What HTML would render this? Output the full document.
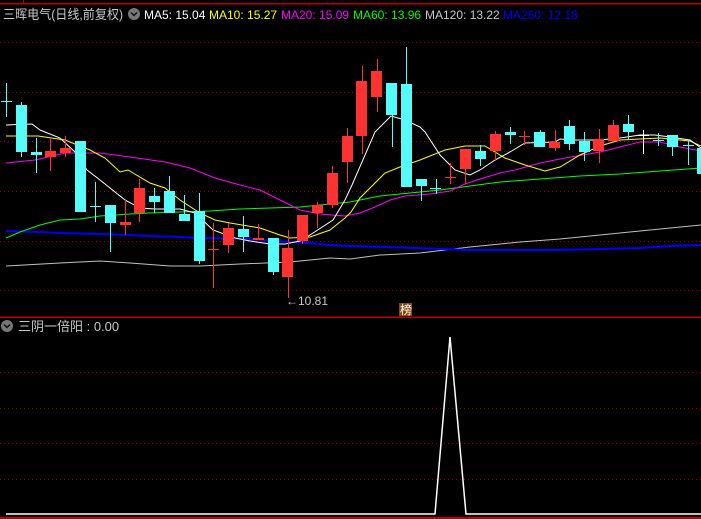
<!DOCTYPE html>
<html><head><meta charset="utf-8"><style>
html,body{margin:0;padding:0;background:#000;width:701px;height:519px;overflow:hidden}
svg{display:block}
text{font-family:"Liberation Sans","Noto Sans CJK SC",sans-serif}
</style></head><body>
<svg width="701" height="519" viewBox="0 0 701 519" xmlns="http://www.w3.org/2000/svg">
<rect width="701" height="519" fill="#000"/>
<g shape-rendering="crispEdges">
<rect x="0" y="3" width="701" height="1.5" fill="#c00000"/>
<rect x="23" y="0" width="1" height="4" fill="#c00000"/>
<rect x="0" y="316.5" width="701" height="1.5" fill="#c00000"/>
<rect x="0" y="517" width="701" height="2" fill="#c00000"/>
<g stroke="#a00000" stroke-width="1" stroke-dasharray="1,3">
<line x1="0" y1="42.5" x2="701" y2="42.5"/><line x1="0" y1="92.5" x2="701" y2="92.5"/>
<line x1="0" y1="141.5" x2="701" y2="141.5"/><line x1="0" y1="191.5" x2="701" y2="191.5"/>
<line x1="0" y1="241.5" x2="701" y2="241.5"/><line x1="0" y1="290.5" x2="701" y2="290.5"/>
<line x1="0" y1="372.5" x2="701" y2="372.5"/><line x1="0" y1="408.5" x2="701" y2="408.5"/>
<line x1="0" y1="443.5" x2="701" y2="443.5"/><line x1="0" y1="479.5" x2="701" y2="479.5"/>
</g>
</g>
<text x="3" y="19" fill="#c8c8c8" font-size="13" textLength="120" lengthAdjust="spacingAndGlyphs">三晖电气(日线,前复权)</text>
<circle cx="134" cy="14" r="6" fill="#777"/><path d="M131 12.5 L134 15.5 L137 12.5" stroke="#111" stroke-width="1.5" fill="none"/>
<text y="19" font-size="12"><tspan x="144" fill="#fff">MA5: 15.04</tspan><tspan x="209" fill="#ffff00">MA10: 15.27</tspan><tspan x="281" fill="#ff00ff">MA20: 15.09</tspan><tspan x="353" fill="#00ff00">MA60: 13.96</tspan><tspan x="425" fill="#c8c8c8">MA120: 13.22</tspan><tspan x="503" fill="#0000ff">MA250: 12.18</tspan></text>

<g fill="none" stroke-width="1">
<polyline stroke="#c0c0c0" points="6,266 60,263 100,261 130,263 170,266 200,266 240,264 290,262 330,258 350,259 380,255 420,253 470,247 520,242 560,239 600,235 650,230 701,225"/>
<polyline stroke="#0000ff" stroke-width="2" points="6,231 40,232 60,233 100,234 130,235 150,236 180,237 200,238 230,238 260,240 290,242 310,243 330,245 350,246 385,247 415,248 470,250 555,250 600,249 640,248 670,246 701,245"/>
<polyline stroke="#00ff00" points="6,238 20,232 40,225 60,220 80,219 100,216 130,214 150,213 180,212 210,211 240,209 270,208 300,207 320,205 340,203 350,202 380,196 410,193 440,190 470,186 500,182 540,179 580,176 620,174 660,171 701,168"/>
<polyline stroke="#ff00ff" points="6,163 35,160 65,153 100,153 130,157 165,162 190,168 215,178 240,185 260,190 280,200 300,210 320,214 345,216 360,213 375,207 390,200 405,196 430,194 450,191 465,184 480,179 500,173 515,170 540,163 565,158 600,152 620,147 640,142 660,142 680,147 701,151"/>
<polyline stroke="#ffff00" points="6,136 38,136 65,140 90,150 105,158 120,172 128,170 150,183 165,188 180,200 200,213 215,220 230,223 260,228 280,235 290,238 310,237 330,230 345,218 351,212 360,198 385,173 400,167 420,160 445,150 465,146 485,146 505,158 525,165 545,171 560,167 580,155 600,146 620,140 640,139 660,138 690,141 701,146"/>
<polyline stroke="#ffffff" points="6,125 32,124 40,130 60,138 75,152 87,170 100,180 125,200 140,208 155,209 180,209 195,213 213,230 235,238 250,241 270,244 285,244 300,241 310,235 333,220 345,200 352,185 375,132 391,116 405,120 420,127 425,132 440,155 455,170 470,175 480,170 495,160 510,152 525,143 555,142 560,139 575,140 600,140 620,138 640,135 655,135 670,137 690,140 701,148"/>
</g>

<g shape-rendering="crispEdges">
<g fill="#54fcfc">
<rect x="6" y="83" width="1" height="34"/><rect x="1" y="101" width="11" height="1"/>
<rect x="21" y="102" width="1" height="55"/><rect x="16" y="105" width="11" height="47"/>
<rect x="36" y="138" width="1" height="35"/><rect x="31" y="152" width="11" height="3"/>
<rect x="75" y="141" width="11" height="71"/>
<rect x="95" y="182" width="1" height="40"/><rect x="90" y="206" width="11" height="1"/>
<rect x="110" y="205" width="1" height="47"/><rect x="105" y="205" width="11" height="18"/>
<rect x="154" y="188" width="1" height="25"/><rect x="149" y="196" width="11" height="6"/>
<rect x="169" y="176" width="1" height="37"/><rect x="164" y="191" width="11" height="22"/>
<rect x="184" y="195" width="1" height="26"/><rect x="179" y="214" width="11" height="7"/>
<rect x="199" y="193" width="1" height="71"/><rect x="194" y="211" width="11" height="50"/>
<rect x="243" y="216" width="1" height="36"/><rect x="238" y="229" width="11" height="8"/>
<rect x="273" y="238" width="1" height="37"/><rect x="268" y="238" width="11" height="34"/>
<rect x="392" y="115" width="1" height="32"/><rect x="386" y="83" width="11" height="32"/>
<rect x="406" y="47" width="1" height="140"/><rect x="401" y="84" width="11" height="103"/>
<rect x="421" y="179" width="1" height="22"/><rect x="416" y="179" width="11" height="7"/>
<rect x="436" y="179" width="1" height="15"/><rect x="430" y="188" width="11" height="1"/>
<rect x="480" y="145" width="1" height="21"/><rect x="475" y="151" width="11" height="8"/>
<rect x="510" y="127" width="1" height="17"/><rect x="505" y="132" width="11" height="3"/>
<rect x="540" y="130" width="1" height="17"/><rect x="534" y="132" width="11" height="15"/>
<rect x="569" y="120" width="1" height="30"/><rect x="564" y="126" width="11" height="18"/>
<rect x="584" y="132" width="1" height="29"/><rect x="579" y="141" width="11" height="11"/>
<rect x="628" y="115" width="1" height="24"/><rect x="623" y="124" width="11" height="8"/>
<rect x="658" y="133" width="1" height="13"/><rect x="653" y="140" width="11" height="1"/>
<rect x="672" y="135" width="1" height="21"/><rect x="667" y="135" width="11" height="12"/>
<rect x="688" y="140" width="1" height="25"/><rect x="683" y="145" width="11" height="1"/>
<rect x="697" y="148" width="4" height="26"/>
</g>
<g fill="#ff3232">
<rect x="50" y="138" width="1" height="33"/><rect x="45" y="151" width="11" height="6"/>
<rect x="65" y="136" width="1" height="21"/><rect x="60" y="148" width="11" height="5"/>
<rect x="125" y="200" width="1" height="35"/><rect x="120" y="222" width="11" height="3"/>
<rect x="139" y="179" width="1" height="43"/><rect x="134" y="188" width="11" height="25"/>
<rect x="213" y="223" width="1" height="65"/><rect x="208" y="249" width="11" height="1"/>
<rect x="228" y="223" width="1" height="30"/><rect x="223" y="228" width="11" height="17"/>
<rect x="258" y="224" width="1" height="16"/><rect x="253" y="238" width="11" height="2"/>
<rect x="288" y="230" width="1" height="68"/><rect x="282" y="248" width="11" height="29"/>
<rect x="302" y="215" width="1" height="29"/><rect x="297" y="215" width="11" height="26"/>
<rect x="317" y="202" width="1" height="26"/><rect x="312" y="205" width="11" height="8"/>
<rect x="332" y="166" width="1" height="42"/><rect x="327" y="173" width="11" height="32"/>
<rect x="347" y="128" width="1" height="55"/><rect x="342" y="136" width="11" height="26"/>
<rect x="362" y="66" width="1" height="88"/><rect x="356" y="81" width="11" height="55"/>
<rect x="377" y="59" width="1" height="53"/><rect x="371" y="71" width="11" height="26"/>
<rect x="450" y="163" width="1" height="21"/><rect x="445" y="177" width="11" height="1"/>
<rect x="465" y="149" width="1" height="35"/><rect x="460" y="149" width="11" height="20"/>
<rect x="495" y="131" width="1" height="30"/><rect x="490" y="134" width="11" height="17"/>
<rect x="524" y="131" width="1" height="14"/><rect x="519" y="136" width="11" height="1"/>
<rect x="555" y="130" width="1" height="21"/><rect x="549" y="142" width="11" height="6"/>
<rect x="599" y="129" width="1" height="34"/><rect x="593" y="139" width="11" height="12"/>
<rect x="613" y="120" width="1" height="21"/><rect x="608" y="125" width="11" height="16"/>
</g>
<rect x="643" y="130" width="1" height="24" fill="#fff"/><rect x="638" y="135" width="11" height="1" fill="#fff"/>
</g>

<text x="286" y="305" fill="#c8c8c8" font-size="12">←10.81</text>
<rect x="399" y="303" width="13" height="13" fill="#8b4513"/>
<text x="400" y="314" fill="#fff" font-size="12">榜</text>

<circle cx="7" cy="326" r="6" fill="#777"/><path d="M4 324.5 L7 327.5 L10 324.5" stroke="#111" stroke-width="1.5" fill="none"/>
<text x="18" y="331" fill="#c8c8c8" font-size="13">三阴一倍阳 : 0.00</text>
<polyline fill="none" stroke="#fff" stroke-width="1.5" points="6,514 435,514 450,337 466,514 701,514"/>
</svg>
</body></html>
